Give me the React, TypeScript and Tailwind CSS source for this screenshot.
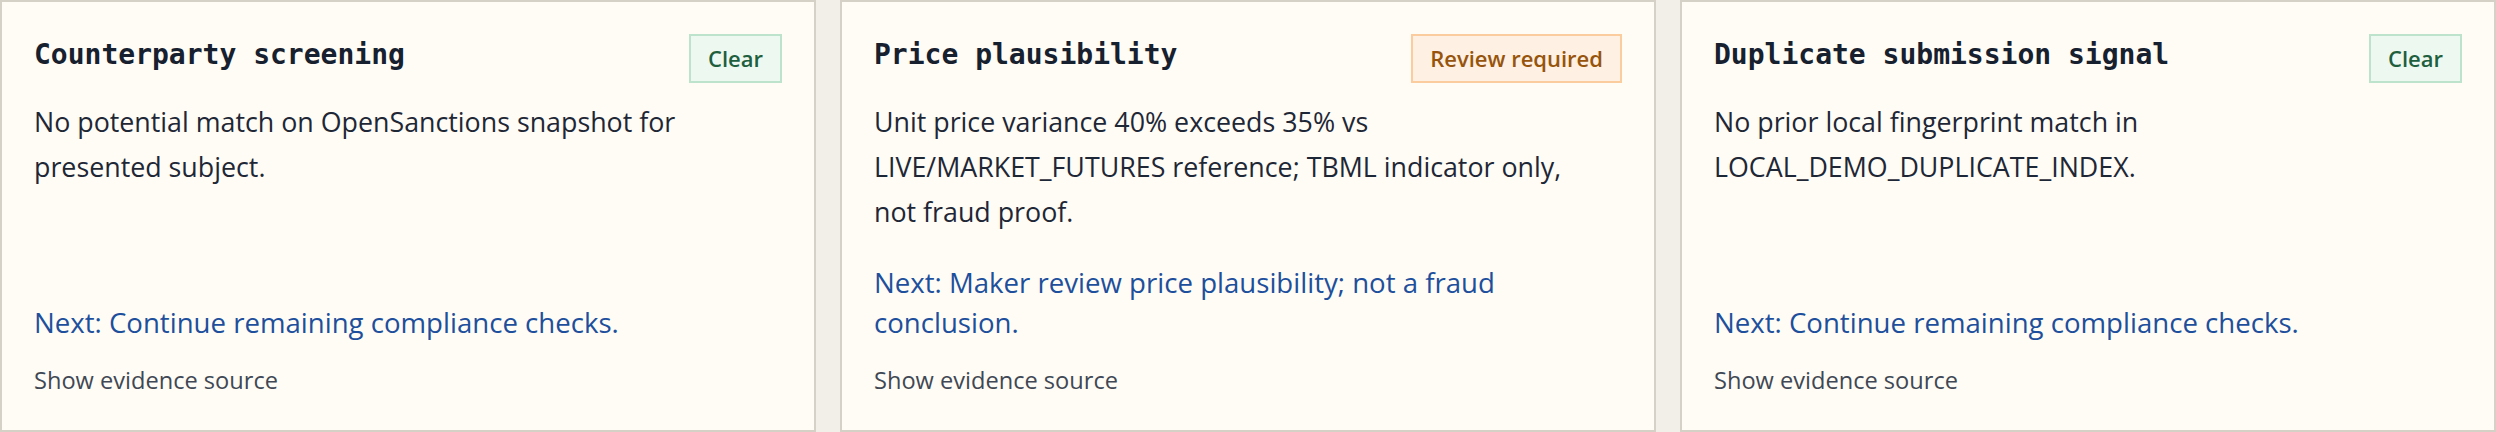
import React from 'react';

type Tone = 'clear' | 'review';

type Check = {
  id: string;
  title: string;
  status: string;
  tone: Tone;
  detail: string;
  next: string;
};

const CHECKS: Check[] = [
  {
    id: 'counterparty',
    title: 'Counterparty screening',
    status: 'Clear',
    tone: 'clear',
    detail: 'No potential match on OpenSanctions snapshot for presented subject.',
    next: 'Next: Continue remaining compliance checks.',
  },
  {
    id: 'price',
    title: 'Price plausibility',
    status: 'Review required',
    tone: 'review',
    detail: 'Unit price variance 40% exceeds 35% vs LIVE/MARKET_FUTURES reference; TBML indicator only, not fraud proof.',
    next: 'Next: Maker review price plausibility; not a fraud conclusion.',
  },
  {
    id: 'duplicate',
    title: 'Duplicate submission signal',
    status: 'Clear',
    tone: 'clear',
    detail: 'No prior local fingerprint match in LOCAL_DEMO_DUPLICATE_INDEX.',
    next: 'Next: Continue remaining compliance checks.',
  },
];

const TONE_CLASSES: Record<Tone, string> = {
  clear: 'bg-[#edf8f1] border-[#bde3cc] text-[#1e5f3e]',
  review: 'bg-[#fef0e2] border-[#fbcd9e] text-[#97540c]',
};

const sans = "font-['Open_Sans','Noto_Sans',sans-serif]";

function CheckCard({ check }: { check: Check }) {
  return (
    <div className="flex flex-col border-2 border-[#d6d1c7] bg-[#fffcf5] p-8">
      <div className="flex items-start justify-between gap-4">
        <h3 className="font-['DejaVu_Sans_Mono','Liberation_Mono',monospace] text-[28px] font-bold leading-[42px] text-[#17202e]">
          {check.title}
        </h3>
        <span className={`${sans} shrink-0 border-2 px-[17px] py-[6px] text-[22px] font-semibold leading-[33px] ${TONE_CLASSES[check.tone]}`}>
          {check.status}
        </span>
      </div>
      <p className={`${sans} mt-4 max-w-[700px] text-[26.8px] leading-[45px] text-[#1e2735]`}>{check.detail}</p>
      <p className={`${sans} mt-auto text-[27.6px] font-medium leading-[40px] text-[#1d4f9c]`}>{check.next}</p>
      <details className="mt-5">
        <summary className={`${sans} list-none cursor-pointer text-[23.6px] leading-[36px] text-[#3f4854] [&::-webkit-details-marker]:hidden`}>
          Show evidence source
        </summary>
      </details>
    </div>
  );
}

export default function App() {
  return (
    <div className="h-[432px] w-[2496px] bg-[#f2efe9]">
      <div className="grid h-full grid-cols-3 gap-6">
        {CHECKS.map((c) => (
          <CheckCard key={c.id} check={c} />
        ))}
      </div>
    </div>
  );
}
